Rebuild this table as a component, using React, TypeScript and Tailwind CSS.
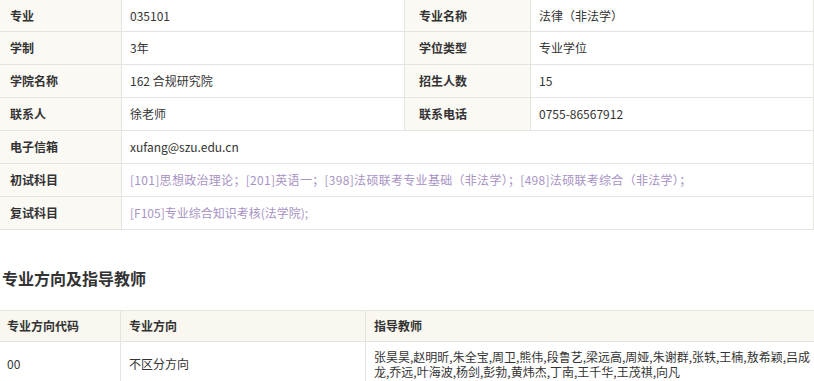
import React from "react";

const font = { fontFamily: '"Noto Sans CJK SC", "Noto Sans", sans-serif' };

function Label({ children, first, left }: { children: React.ReactNode; first?: boolean; left?: boolean }) {
  return (
    <div
      className={`flex items-center border-b border-r border-[#e6e4e0] bg-[#fbf9f4] text-[12px] font-bold text-[#333] ${left ? "pl-[10px]" : "pl-[14px]"} ${first ? "h-[32px]" : "h-[33px]"}`}
    >
      {children}
    </div>
  );
}

function Value({ children, first, span, purple }: { children: React.ReactNode; first?: boolean; span?: boolean; purple?: boolean }) {
  return (
    <div
      className={`flex items-center whitespace-nowrap border-b border-r border-[#e6e4e0] bg-white pl-[8px] text-[12px] ${purple ? "text-[#a893c4]" : "text-[#333]"} ${first ? "h-[32px]" : "h-[33px]"} ${span ? "col-span-3" : ""}`}
    >
      {children}
    </div>
  );
}

export default function App() {
  return (
    <div className="w-[814px] h-[381px] overflow-hidden bg-white" style={font}>
      <div className="grid grid-cols-[122px_283px_126px_1fr]">
        <Label first left>专业</Label>
        <Value first>035101</Value>
        <Label first>专业名称</Label>
        <Value first>法律（非法学）</Value>

        <Label left>学制</Label>
        <Value>3年</Value>
        <Label>学位类型</Label>
        <Value>专业学位</Value>

        <Label left>学院名称</Label>
        <Value>162 合规研究院</Value>
        <Label>招生人数</Label>
        <Value>15</Value>

        <Label left>联系人</Label>
        <Value>徐老师</Value>
        <Label>联系电话</Label>
        <Value>0755-86567912</Value>

        <Label left>电子信箱</Label>
        <Value span>xufang@szu.edu.cn</Value>

        <Label left>初试科目</Label>
        <Value span purple>
          <span className="tracking-[0.3px]">
            [101]思想政治理论；[201]英语一；[398]法硕联考专业基础（非法学）；[498]法硕联考综合（非法学）；
          </span>
        </Value>

        <Label left>复试科目</Label>
        <Value span purple>[F105]专业综合知识考核(法学院);</Value>
      </div>

      <h2 className="mt-[36px] mb-[20px] h-[24px] pl-[2px] text-[16px] leading-[24px] font-bold text-[#333]">
        专业方向及指导教师
      </h2>

      <div className="grid grid-cols-[121px_245px_1fr] border-t border-[#e6e4e0]">
        <div className="flex h-[31px] items-center border-b border-r border-[#e6e4e0] bg-[#f9f7f0] pl-[7px] text-[12px] font-bold text-[#333]">
          专业方向代码
        </div>
        <div className="flex h-[31px] items-center border-b border-r border-[#e6e4e0] bg-[#f9f7f0] pl-[8px] text-[12px] font-bold text-[#333]">
          专业方向
        </div>
        <div className="flex h-[31px] items-center border-b border-[#e6e4e0] bg-[#f9f7f0] pl-[8px] text-[12px] font-bold text-[#333]">
          指导教师
        </div>

        <div className="flex items-center border-b border-r border-[#e6e4e0] pl-[7px] text-[12px] text-[#333]">
          00
        </div>
        <div className="flex items-center border-b border-r border-[#e6e4e0] pl-[8px] text-[12px] text-[#333]">
          不区分方向
        </div>
        <div className="border-b border-[#e6e4e0] py-[7px] pl-[8px] text-[12px] leading-[15px] text-[#333]">
          <div className="whitespace-nowrap">
            张昊昊,赵明昕,朱全宝,周卫,熊伟,段鲁艺,梁远高,周娅,朱谢群,张轶,王楠,敖希颖,吕成
          </div>
          <div className="whitespace-nowrap">龙,乔远,叶海波,杨剑,彭勃,黄炜杰,丁南,王千华,王茂祺,向凡</div>
        </div>
      </div>
    </div>
  );
}
